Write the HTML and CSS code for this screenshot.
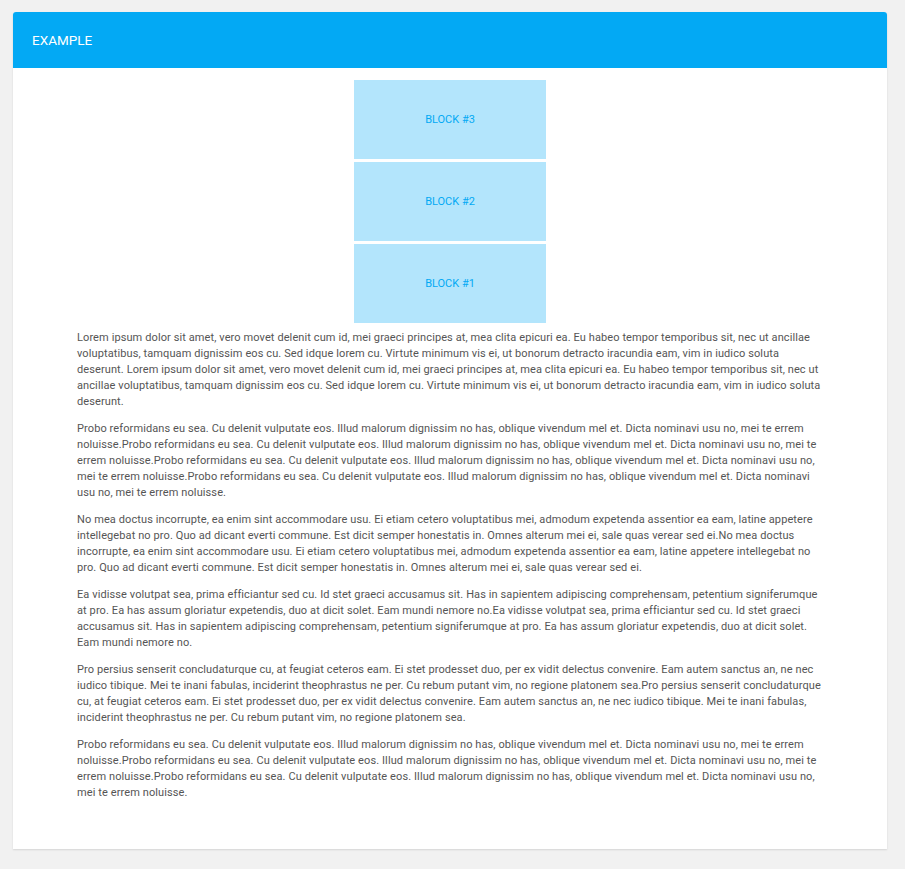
FILE: index.html
```html
<!DOCTYPE html>
<html>
<head>
<meta charset="utf-8">
<link rel="stylesheet" href="styles.css">
</head>
<body>
<div class="card">
  <div class="card-header">EXAMPLE</div>
  <div class="card-body">
    <div class="stack">
      <div class="block">BLOCK #3</div>
      <div class="block">BLOCK #2</div>
      <div class="block">BLOCK #1</div>
    </div>
    <div class="text">
      <p>Lorem ipsum dolor sit amet, vero movet delenit cum id, mei graeci principes at, mea clita epicuri ea. Eu habeo tempor temporibus sit, nec ut ancillae voluptatibus, tamquam dignissim eos cu. Sed idque lorem cu. Virtute minimum vis ei, ut bonorum detracto iracundia eam, vim in iudico soluta deserunt.&nbsp;Lorem ipsum dolor sit amet, vero movet delenit cum id, mei graeci principes at, mea clita epicuri ea. Eu habeo tempor temporibus sit, nec ut ancillae voluptatibus, tamquam dignissim eos cu. Sed idque lorem cu. Virtute minimum vis ei, ut bonorum detracto iracundia eam, vim in iudico soluta deserunt.</p>
      <p>Probo reformidans eu sea. Cu delenit vulputate eos. Illud malorum dignissim no has, oblique vivendum mel et. Dicta nominavi usu no, mei te errem noluisse.Probo reformidans eu sea. Cu delenit vulputate eos. Illud malorum dignissim no has, oblique vivendum mel et. Dicta nominavi usu no, mei te errem noluisse.Probo reformidans eu sea. Cu delenit vulputate eos. Illud malorum dignissim no has, oblique vivendum mel et. Dicta nominavi usu no, mei te errem noluisse.Probo reformidans eu sea. Cu delenit vulputate eos. Illud malorum dignissim no has, oblique vivendum mel et. Dicta nominavi usu no, mei te errem noluisse.</p>
      <p>No mea doctus incorrupte, ea enim sint accommodare usu. Ei etiam cetero voluptatibus mei, admodum expetenda assentior ea eam, latine appetere intellegebat no pro. Quo ad dicant everti commune. Est dicit semper honestatis in. Omnes alterum mei ei, sale quas verear sed ei.No mea doctus incorrupte, ea enim sint accommodare usu. Ei etiam cetero voluptatibus mei, admodum expetenda assentior ea eam, latine appetere intellegebat no pro. Quo ad dicant everti commune. Est dicit semper honestatis in. Omnes alterum mei ei, sale quas verear sed ei.</p>
      <p>Ea vidisse volutpat sea, prima efficiantur sed cu. Id stet graeci accusamus sit. Has in sapientem adipiscing comprehensam, petentium signiferumque at pro. Ea has assum gloriatur expetendis, duo at dicit solet. Eam mundi nemore no.Ea vidisse volutpat sea, prima efficiantur sed cu. Id stet graeci accusamus sit. Has in sapientem adipiscing comprehensam, petentium signiferumque at pro. Ea has assum gloriatur expetendis, duo at dicit solet. Eam mundi nemore no.</p>
      <p>Pro persius senserit concludaturque cu, at feugiat ceteros eam. Ei stet prodesset duo, per ex vidit delectus convenire. Eam autem sanctus an, ne nec iudico tibique. Mei te inani fabulas, inciderint theophrastus ne per. Cu rebum putant vim, no regione platonem sea.Pro persius senserit concludaturque cu, at feugiat ceteros eam. Ei stet prodesset duo, per ex vidit delectus convenire. Eam autem sanctus an, ne nec iudico tibique. Mei te inani fabulas, inciderint theophrastus ne per. Cu rebum putant vim, no regione platonem sea.</p>
      <p>Probo reformidans eu sea. Cu delenit vulputate eos. Illud malorum dignissim no has, oblique vivendum mel et. Dicta nominavi usu no, mei te errem noluisse.Probo reformidans eu sea. Cu delenit vulputate eos. Illud malorum dignissim no has, oblique vivendum mel et. Dicta nominavi usu no, mei te errem noluisse.Probo reformidans eu sea. Cu delenit vulputate eos. Illud malorum dignissim no has, oblique vivendum mel et. Dicta nominavi usu no, mei te errem noluisse.</p>
    </div>
  </div>
</div>
</body>
</html>
```
FILE: styles.css
```css
html, body {
  margin: 0;
  padding: 0;
  background: #f1f1f1;
}
body {
  padding: 12px 18px 20px 13px;
  font-family: Roboto, "Liberation Sans", sans-serif;
}
.card {
  background: #fff;
  border-radius: 3px 3px 0 0;
  box-shadow: 0 1px 2px rgba(0,0,0,0.12);
  height: 837px;
  box-sizing: border-box;
}
.card-header {
  background: #03a9f4;
  color: #fff;
  font-size: 13.5px;
  height: 56px;
  line-height: 56px;
  padding: 0 19px;
  border-radius: 3px 3px 0 0;
}
.card-body {
  padding: 12px 64px 0 64px;
}
.stack {
  display: flex;
  flex-direction: column;
  align-items: center;
  gap: 3px;
}
.block {
  width: 192px;
  height: 79px;
  background: #b3e5fc;
  color: #03a9f4;
  font-size: 11px;
  display: flex;
  align-items: center;
  justify-content: center;
}
.text {
  padding-top: 7px;
}
.text p {
  margin: 0 0 11px 0;
  font-size: 11px;
  line-height: 16px;
  letter-spacing: 0.1px;
  color: #555;
}
```
